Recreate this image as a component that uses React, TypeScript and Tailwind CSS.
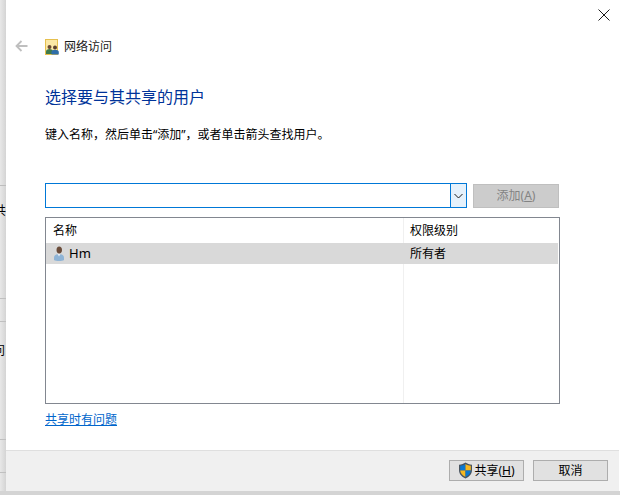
const CJK = "font-['Noto_Sans','Noto_Sans_CJK_SC',sans-serif]";

function NetworkIcon() {
  return (
    <svg width="14" height="16" viewBox="0 0 14 16">
      <rect x="0.5" y="0.5" width="12" height="15" fill="#fbe8a6" stroke="#e6c04e" />
      <circle cx="4.5" cy="8" r="2" fill="#6b4a32" />
      <path d="M1 15v-2.500c0-1.500 1.500-2.500 3.500-2.500s3.500 1 3.500 2.500V15z" fill="#3f7a4c" />
      <circle cx="10" cy="8.500" r="2" fill="#5a4030" />
      <path d="M6.500 15.500v-2.500c0-1.400 1.500-2.200 3.500-2.200s3.800 .8 3.800 2.200v2.500z" fill="#2f6ea8" />
    </svg>
  );
}

function UserIcon() {
  return (
    <svg width="12" height="15" viewBox="0 0 12 15">
      <path d="M3.500 4c0-2 1-3.500 2.700-3.500S9 2 9 4 7.900 7.500 6.200 7.500 3.500 6 3.500 4z" fill="#6b4c3a" />
      <path d="M1 14v-2.500C1 9.500 3 8 6 8s5 1.500 5 3.500V14c-1 .7-2.800 1-5 1s-4-.3-5-1z" fill="#8fb4d6" />
      <path d="M4.500 8h3l-1.500 2.500z" fill="#e8eef5" />
    </svg>
  );
}

function ShieldIcon() {
  return (
    <svg width="15" height="17" viewBox="0 0 15 17">
      <path d="M7.500 .5c1.800 1.300 3.800 2 6.500 2.200v5.300c0 4-2.500 6.800-6.500 8.500C3.500 14.800 1 12 1 8V2.700C3.700 2.500 5.700 1.800 7.500 .5z" fill="#4a5560" />
      <path d="M7.500 2v6.500H2.200V3.700C4.200 3.500 6 3 7.500 2z" fill="#0b78d0" />
      <path d="M7.500 2c1.500 1 3.300 1.500 5.300 1.700v4.800H7.500z" fill="#f7b820" />
      <path d="M2.200 8.500h5.300V15c-3-1.400-5.100-3.500-5.300-6.500z" fill="#f7b820" />
      <path d="M7.500 8.500h5.300c-.2 3-2.300 5.100-5.300 6.500z" fill="#0b78d0" />
    </svg>
  );
}

export default function App() {
  return (
    <div className={`flex h-[495px] w-[620px] flex-col overflow-hidden bg-white text-xs text-black ${CJK}`}>
      <div className="flex h-[491px]">
        {/* window behind the dialog */}
        <div className="relative h-full w-[6px] overflow-hidden bg-gradient-to-r from-[#e8e8e8] to-[#d4d4d4]">
          <div className="mt-[185px] h-px bg-[#bdbdbd]" />
          <div className="absolute -left-[6px] top-[203px] text-xs leading-4">共</div>
          <div className="mt-[112px] h-px bg-[#c0c0c0]" />
          <div className="mt-[22px] h-px bg-[#c0c0c0]" />
          <div className="absolute -left-[7px] top-[343px] text-xs leading-4">问</div>
          <div className="mt-[117px] h-px bg-[#c0c0c0]" />
          <div className="mt-[32px] h-px bg-[#c0c0c0]" />
        </div>

        {/* dialog */}
        <div className="flex h-full w-[613px] flex-col bg-white">
          <div className="flex flex-1 flex-col">
            <div className="flex h-[30px] justify-end">
              <svg width="12" height="12" viewBox="0 0 12 12" className="mr-[9px] mt-[9px]">
                <path d="M.5 .5l11 11M11.500 .5l-11 11" stroke="#1a1a1a" strokeWidth="1" fill="none" />
              </svg>
            </div>

            <div className="flex h-[34px] items-center pl-[9px]">
              <svg width="13" height="12" viewBox="0 0 13 12" className="mb-[2px]">
                <path d="M12.500 6H1.500M6.500 1l-5 5 5 5" stroke="#bfbfbf" strokeWidth="1.800" fill="none" />
              </svg>
              <div className="ml-[17px] flex items-center gap-[5px]">
                <NetworkIcon />
                <span className="text-xs leading-4 text-[#1a1a1a]">网络访问</span>
              </div>
            </div>

            <div className="flex flex-1 flex-col pl-[39px]">
              <h1 className="mt-[21px] text-base font-normal leading-6 text-[#003399]">选择要与其共享的用户</h1>
              <p className="mt-[18px] text-xs leading-4">键入名称，然后单击“添加”，或者单击箭头查找用户。</p>

              <div className="mt-[40px] flex h-[25px] items-stretch">
                <div className="flex w-[422px] justify-end border border-[#0078d7] bg-white">
                  <div className="flex w-4 items-center justify-center border-l border-[#0078d7] bg-[#e5f1fb]">
                    <svg width="9" height="6" viewBox="0 0 9 6">
                      <path d="M.5 1l4 4 4-4" stroke="#1a1a1a" strokeWidth="1" fill="none" />
                    </svg>
                  </div>
                </div>
                <div className="ml-[6px] mt-px flex w-[86px] items-center justify-center border border-[#bfbfbf] bg-[#cccccc] text-xs text-[#838383]">
                  添加(<span className="underline">A</span>)
                </div>
              </div>

              <div className="relative mt-[9px] flex h-[187px] w-[515px] flex-col border border-[#828790] bg-white">
                <div className="absolute bottom-0 left-[357px] top-0 w-px bg-[#f0f0f0]" />
                <div className="flex h-[25px] items-center">
                  <span className="w-[364px] pl-[7px]">名称</span>
                  <span>权限级别</span>
                </div>
                <div className="relative mr-px flex h-[21px] items-center bg-[#d9d9d9]">
                  <div className="flex w-[364px] items-center gap-[4px] pl-[7px]">
                    <UserIcon />
                    <span className="text-[13px]">Hm</span>
                  </div>
                  <span>所有者</span>
                </div>
              </div>

              <a className="mt-[8px] w-fit text-xs leading-4 text-[#0066cc] underline">共享时有问题</a>
            </div>
          </div>

          <div className="flex h-[41px] items-start justify-end gap-[9px] border-t border-[#dfdfdf] bg-[#f0f0f0] pr-[11px] pt-[9px]">
            <button className="flex h-[21px] w-[75px] items-center justify-center gap-px border border-[#adadad] bg-[#e1e1e1] text-xs">
              <ShieldIcon />
              <span>共享(<span className="underline">H</span>)</span>
            </button>
            <button className="flex h-[21px] w-[75px] items-center justify-center border border-[#adadad] bg-[#e1e1e1] text-xs">
              取消
            </button>
          </div>
        </div>
      </div>
      <div className="flex-1 bg-[#d4d4d4]" />
    </div>
  );
}
